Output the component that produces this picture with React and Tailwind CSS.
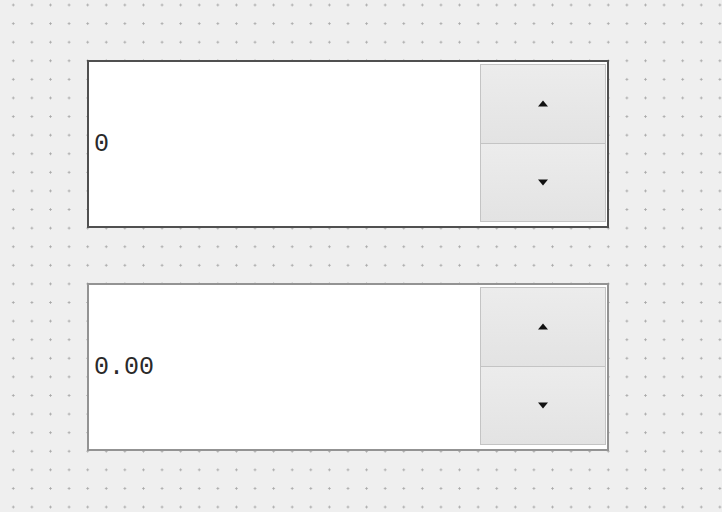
function Arrow({ up }) {
  return (
    <svg width="12" height="7" viewBox="0 0 12 7" className="block">
      {up ? <polygon points="6,0.5 11,6.5 1,6.5" fill="#111" /> : <polygon points="1,0.5 11,0.5 6,6.5" fill="#111" />}
    </svg>
  );
}

function SpinBox({ value, focused }) {
  return (
    <div
      className={`flex h-[168px] w-[522px] bg-white border-2 ${
        focused ? "border-[#505050]" : "border-[#939393]"
      }`}
    >
      <div className="flex flex-1 items-center pl-[5px] font-['Liberation_Mono',monospace] text-[25px] leading-none text-[#2a2a2a]">
        {value}
      </div>
      <div className="flex w-[127px] flex-col pt-[2px] pr-[1px] pb-[4px]">
        <button className="flex flex-1 items-center justify-center border border-[#c4c4c4] bg-gradient-to-b from-[#ececec] to-[#e3e3e3]">
          <Arrow up />
        </button>
        <button className="flex flex-1 items-center justify-center border border-t-0 border-[#c4c4c4] bg-gradient-to-b from-[#ececec] to-[#e3e3e3]">
          <Arrow />
        </button>
      </div>
    </div>
  );
}

export default function App() {
  return (
    <div className="h-[512px] w-[722px] bg-[#efefef] bg-[radial-gradient(circle,#a8a8a8_0.9px,transparent_1.3px)] bg-[length:18.6px_18.6px] bg-[position:4px_-4.3px] pl-[87px] pt-[60px]">
      <div className="flex flex-col gap-[55px]">
        <SpinBox value="0" focused />
        <SpinBox value="0.00" />
      </div>
    </div>
  );
}
